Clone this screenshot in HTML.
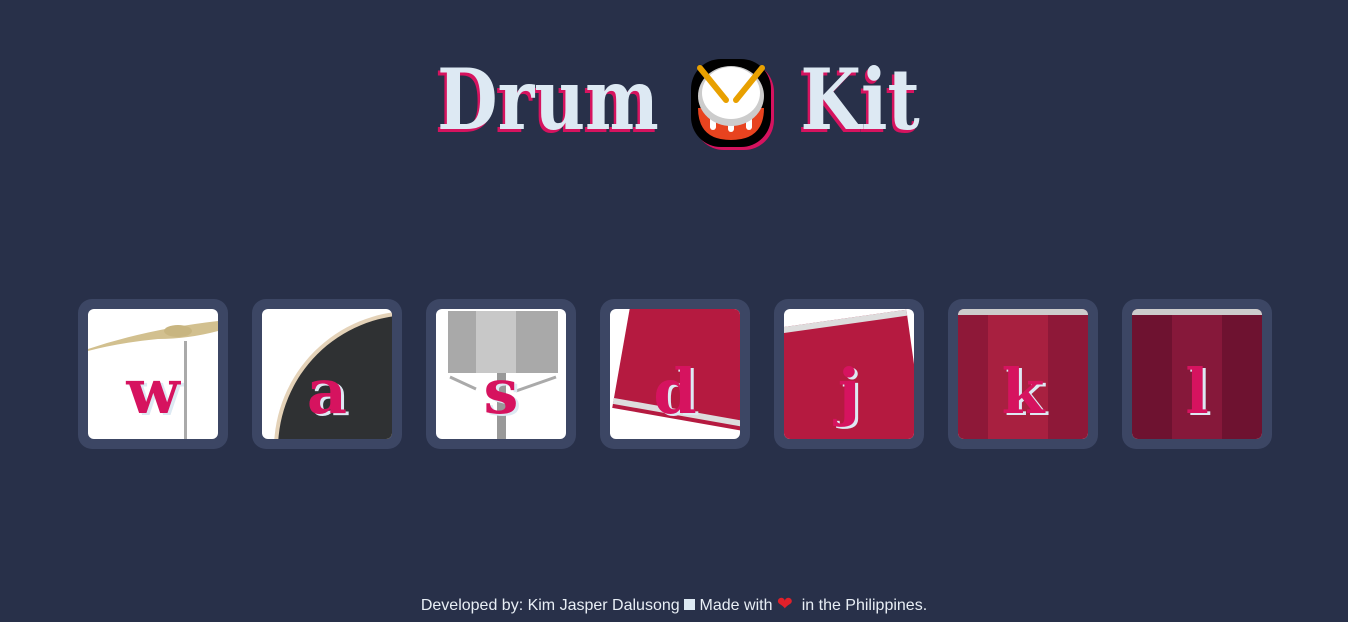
<!DOCTYPE html>
<html><head><meta charset="utf-8"><style>
body{margin:0;width:1348px;height:622px;background:#283049;overflow:hidden;font-family:"Liberation Sans",sans-serif;position:relative}
.t{position:absolute;top:50px;width:300px;text-align:center;font-family:"DejaVu Serif",serif;font-weight:bold;font-size:84px;color:#dde9f3;text-shadow:-3px 3px 0 #d6135f;line-height:100px;white-space:nowrap;transform:scaleX(0.83)}
.tile{position:absolute;top:299px;width:150px;height:150px;background:#3c4664;border-radius:14px}
.in{position:absolute;left:10px;top:10px;width:130px;height:130px;background:#fff;border-radius:6px;overflow:hidden}
.in svg{position:absolute;left:0;top:0}
.k{position:absolute;left:0;top:43px;width:130px;text-align:center;font-family:"DejaVu Serif",serif;font-weight:bold;font-size:62px;color:#d6135f;text-shadow:3px 2px 0 #dde9f3;line-height:80px}
.foot{position:absolute;top:593px;width:1348px;text-align:center;color:#e8eef5;font-size:16px}
</style></head><body>
<div class="t" style="left:398px">Drum</div>
<div class="t" style="left:710px">Kit</div>
<svg style="position:absolute;left:688px;top:56px" width="88" height="95" viewBox="0 0 88 95">
<rect x="6" y="6" width="80" height="88" rx="30" fill="#d6135f"/>
<rect x="3" y="3" width="80" height="88" rx="30" fill="#000"/>
<path d="M10 52 Q10 84 43 84 Q76 84 76 52 Z" fill="#e8431f"/>
<rect x="22" y="60" width="6" height="14" rx="3" fill="#fff"/><rect x="40" y="64" width="6" height="12" rx="3" fill="#fff"/><rect x="58" y="60" width="6" height="14" rx="3" fill="#fff"/>
<ellipse cx="43" cy="40" rx="33" ry="30" fill="#ccc"/><ellipse cx="43" cy="37" rx="29" ry="26" fill="#fff"/>
<path d="M12 12 L38 44 M74 12 L48 44" stroke="#e8a000" stroke-width="6" stroke-linecap="round"/>
</svg>

<div class="tile" style="left:78px"><div class="in"><svg width="130" height="130"><path d="M0 40 Q60 20 130 12 L130 22 Q100 30 70 30 Q30 34 0 42Z" fill="#d2c08f"/><ellipse cx="90" cy="22" rx="14" ry="6" fill="#c8b580"/><rect x="96" y="32" width="3" height="100" fill="#aaa"/></svg><div class="k">w</div></div></div>
<div class="tile" style="left:252px"><div class="in"><svg width="130" height="130"><circle cx="150" cy="140" r="138" fill="#e4d2b8"/><circle cx="150" cy="140" r="134" fill="#2f3133"/></svg><div class="k">a</div></div></div>
<div class="tile" style="left:426px"><div class="in"><svg width="130" height="130"><rect x="12" y="2" width="110" height="62" fill="#a9a9a9"/><rect x="40" y="2" width="40" height="62" fill="#c8c8c8"/><path d="M14 68 L40 80 M120 68 L80 82" stroke="#aaa" stroke-width="3"/><rect x="61" y="64" width="9" height="66" fill="#999"/></svg><div class="k">s</div></div></div>
<div class="tile" style="left:600px"><div class="in"><svg width="130" height="130"><g transform="rotate(10 70 60)"><rect x="10" y="-10" width="130" height="120" fill="#b51a40"/><rect x="10" y="100" width="130" height="6" fill="#ddd"/></g></svg><div class="k">d</div></div></div>
<div class="tile" style="left:774px"><div class="in"><svg width="130" height="130"><g transform="rotate(-8 60 60)"><rect x="-10" y="10" width="140" height="130" fill="#b51a40"/><rect x="-10" y="10" width="140" height="6" fill="#ddd"/></g></svg><div class="k">j</div></div></div>
<div class="tile" style="left:948px"><div class="in"><svg width="130" height="130"><rect width="130" height="130" fill="#8e1838"/><rect x="30" y="0" width="60" height="130" fill="#a82040"/><rect width="130" height="6" fill="#ccc"/></svg><div class="k">k</div></div></div>
<div class="tile" style="left:1122px"><div class="in"><svg width="130" height="130"><rect width="130" height="130" fill="#6e1230"/><rect x="40" y="0" width="50" height="130" fill="#86183a"/><rect width="130" height="6" fill="#ccc"/></svg><div class="k">l</div></div></div>

<div class="foot">Developed by: Kim Jasper Dalusong <span style="display:inline-block;width:11px;height:11px;background:#dde9f3"></span> Made with <span style="color:#e0202a;font-size:19px">❤</span>&nbsp; in the Philippines.</div>
</body></html>
